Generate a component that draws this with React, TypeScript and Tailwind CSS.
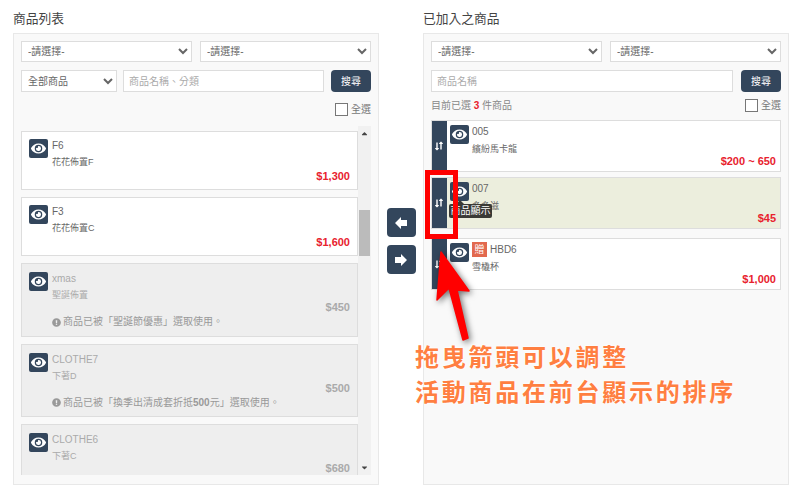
import { FaEye, FaExclamationCircle, FaLongArrowAltDown, FaLongArrowAltUp, FaCaretUp, FaCaretDown } from "react-icons/fa";

const FONT = "font-['Liberation_Sans','Noto_Sans_CJK_TC',sans-serif]";

const FilterSelect = ({ label, className }: { label: string; className: string }) => (
  <select className={`bg-white border border-[#ddd] text-[10px] text-[#666] pl-[2px] ${className}`}>
    <option>{label}</option>
  </select>
);

const EyeButton = () => (
  <div className="w-[19px] h-[19px] flex-none rounded-[2px] bg-[#33465c] flex items-center justify-center text-white">
    <FaEye className="w-[15px] h-[15px]" />
  </div>
);

const SearchButton = () => (
  <button className="w-[40px] h-[22px] flex-none rounded-[4px] bg-[#33465c] text-white text-[10px]">搜尋</button>
);

const CheckAll = () => (
  <label className="flex items-center gap-[3px] text-[10px] text-[#777]">
    <span className="w-[13px] h-[13px] bg-white border border-[#777]" />
    全選
  </label>
);

const ProductCard = ({ name, sub, price }: { name: string; sub: string; price: string }) => (
  <div className="h-[59px] flex-none bg-white border border-[#ddd] pl-[7px] pr-[7px] pt-[7px] flex gap-[4px]">
    <EyeButton />
    <div className="flex-1">
      <div className="text-[10px] leading-[14px] text-[#666]">{name}</div>
      <div className="text-[9px] leading-[12px] mt-[3px] text-[#666]">{sub}</div>
      <div className="text-[11px] leading-[14px] mt-[1px] font-bold text-[#e8222e] text-right">{price}</div>
    </div>
  </div>
);

const DisabledCard = ({ name, sub, price, note }: { name: string; sub: string; price: string; note?: string }) => (
  <div className="h-[73.5px] flex-none bg-[#eee] border border-[#ddd] pl-[7px] pr-[7px] pt-[8px] flex gap-[4px]">
    <EyeButton />
    <div className="flex-1">
      <div className="text-[10px] leading-[14px] text-[#aaa]">{name}</div>
      <div className="text-[9px] leading-[12px] mt-[3px] text-[#aaa]">{sub}</div>
      <div className="text-[11px] leading-[14px] -mt-[1px] font-bold text-[#aaa] text-right">{price}</div>
      {note && (
        <div className="mt-[1px] flex items-center gap-[2px] text-[10px] leading-[14px] text-[#999] whitespace-nowrap">
          <FaExclamationCircle className="w-[9px] h-[9px]" />
          <span dangerouslySetInnerHTML={{ __html: note }} />
        </div>
      )}
    </div>
  </div>
);

const SortCard = ({ name, sub, price, gift, tint }: { name: string; sub: string; price: string; gift?: boolean; tint?: boolean }) => (
  <div className={`h-[52px] flex border border-[#ddd] ${tint ? "bg-[#eceedd]" : "bg-white"}`}>
    <div className="w-[15px] flex-none bg-[#33465c] flex items-center justify-center pr-[2px] text-white">
      <FaLongArrowAltDown className="w-[6px] h-[9px] -mr-[1px] mt-[1px]" />
      <FaLongArrowAltUp className="w-[6px] h-[9px] -ml-[1px] -mt-[2px]" />
    </div>
    <div className="flex-1 flex gap-[3px] pl-[3px] pr-[4px] pt-[4px]">
      <EyeButton />
      <div className="flex-1">
        <div className="flex items-center gap-[3px] h-[13px] text-[10px] text-[#666]">
          {gift && <span className="w-[15px] h-[15px] bg-[#e2694f] text-white text-[10px] leading-[15px] text-center">贈</span>}
          {name}
        </div>
        <div className="text-[9px] leading-[12px] mt-[5px] text-[#666]">{sub}</div>
        <div className="text-[11px] leading-[14px] -mt-[1px] font-bold text-[#e8222e] text-right">{price}</div>
      </div>
    </div>
  </div>
);

const MoveButton = ({ d }: { d: string }) => (
  <button className="w-[29px] h-[29px] rounded-[4px] bg-[#33465c] text-white flex items-center justify-center">
    <svg width="12" height="12" viewBox="0 0 12 12" fill="currentColor">
      <path d={d} />
    </svg>
  </button>
);

export default function App() {
  return (
    <div className={`relative h-[489px] w-[800px] overflow-hidden bg-white flex px-[13px] pt-[10px] ${FONT}`}>
      {/* left column */}
      <div className="w-[366px] flex-none flex flex-col">
        <h2 className="h-[23px] text-[12.75px] leading-[17px] text-[#444]">商品列表</h2>
        <div className="h-[452px] bg-[#f9f9f9] border border-[#e8e8e8] px-[7px] pt-[7px] flex flex-col">
          <div className="flex gap-[8px]">
            <FilterSelect label="-請選擇-" className="w-[171px] h-[21px]" />
            <FilterSelect label="-請選擇-" className="w-[171px] h-[21px]" />
          </div>
          <div className="flex mt-[8px]">
            <FilterSelect label="全部商品" className="w-[96px] h-[22px] flex-none mr-[6px]" />
            <input placeholder="商品名稱、分類" className="w-[201px] h-[22px] mr-[7px] bg-white border border-[#ddd] px-[5px] text-[10px] placeholder:text-[#aaa]" />
            <SearchButton />
          </div>
          <div className="flex justify-end mt-[10px] h-[14px]">
            <CheckAll />
          </div>
          <div className="flex mt-[10px] h-[349px] overflow-hidden">
            <div className="w-[337px] flex-none flex flex-col gap-[7px] pt-[5px]">
              <ProductCard name="F6" sub="花花佈置F" price="$1,300" />
              <ProductCard name="F3" sub="花花佈置C" price="$1,600" />
              <DisabledCard name="xmas" sub="聖誕佈置" price="$450" note="商品已被「聖誕節優惠」選取使用。" />
              <DisabledCard name="CLOTHE7" sub="下著D" price="$500" note="商品已被「換季出清成套折抵<b>500</b>元」選取使用。" />
              <DisabledCard name="CLOTHE6" sub="下著C" price="$680" />
            </div>
            <div className="w-[13px] flex-none bg-[#f1f1f1] flex flex-col items-center text-[#444]">
              <FaCaretUp className="w-[9px] h-[9px] mt-[3px]" />
              <div className="w-[11px] h-[46px] mt-[72px] bg-[#bbb]" />
              <FaCaretDown className="w-[9px] h-[9px] mt-auto mb-[3px]" />
            </div>
          </div>
        </div>
      </div>

      {/* move buttons */}
      <div className="w-[44px] flex-none flex flex-col items-center pt-[198px] gap-[8px]">
        <MoveButton d="M0 6 L6 0 V3 H12 V9 H6 V12 Z" />
        <MoveButton d="M12 6 L6 0 V3 H0 V9 H6 V12 Z" />
      </div>

      {/* right column */}
      <div className="w-[366px] flex-none flex flex-col">
        <h2 className="h-[23px] text-[12.75px] leading-[17px] text-[#444]">已加入之商品</h2>
        <div className="h-[452px] bg-[#f9f9f9] border border-[#e8e8e8] px-[7px] pt-[7px] flex flex-col">
          <div className="flex gap-[8px]">
            <FilterSelect label="-請選擇-" className="w-[171px] h-[21px]" />
            <FilterSelect label="-請選擇-" className="w-[171px] h-[21px]" />
          </div>
          <div className="flex gap-[8px] mt-[8px]">
            <input placeholder="商品名稱" className="w-[302px] h-[22px] bg-white border border-[#ddd] px-[5px] text-[10px] placeholder:text-[#aaa]" />
            <SearchButton />
          </div>
          <div className="flex items-center justify-between mt-[6px] h-[14px] text-[10px] text-[#888]">
            <span>目前已選 <span className="text-[#e8222e] font-bold">3</span> 件商品</span>
            <CheckAll />
          </div>
          <div className="mt-[8px] flex flex-col">
            <SortCard name="005" sub="繽紛馬卡龍" price="$200 ~ 650" />
            <div className="mt-[5px]">
              <SortCard name="007" sub="多多滋" price="$45" tint />
            </div>
            <div className="mt-[9px]">
              <SortCard name="HBD6" sub="雪橇杯" price="$1,000" gift />
            </div>
          </div>
        </div>
      </div>

      {/* tooltip */}
      <div className="absolute left-[449px] top-[204px] w-[43px] h-[14px] rounded-[2px] bg-[#3a3a36] text-white text-[10px] leading-[14px] text-center">
        <span className="absolute left-[7px] -top-[4px] w-0 h-0 border-x-[4px] border-x-transparent border-b-[4px] border-b-[#3a3a36]" />
        商品顯示
      </div>

      {/* annotation */}
      <div className="absolute left-[425px] top-[170px] w-[33px] h-[69px] border-[5px] border-[#f00]" />
      <svg className="absolute left-[425px] top-[240px] drop-shadow-[2px_2px_3px_rgba(0,0,0,0.55)]" width="60" height="105" viewBox="0 0 60 105">
        <path d="M16 12 L44 51 L32 50 L43 98 L38 100 L24 48 L12 60 Z" fill="#f00" stroke="#f00" strokeWidth="1.5" strokeLinejoin="round" />
      </svg>
      <div className="absolute left-[415px] top-[340px] text-[24px] leading-[35px] tracking-[2.75px] text-[#ff7f41] font-bold whitespace-nowrap [text-shadow:0_0_3px_#fff,0_0_3px_#fff]">
        拖曳箭頭可以調整
        <br />
        活動商品在前台顯示的排序
      </div>
    </div>
  );
}
